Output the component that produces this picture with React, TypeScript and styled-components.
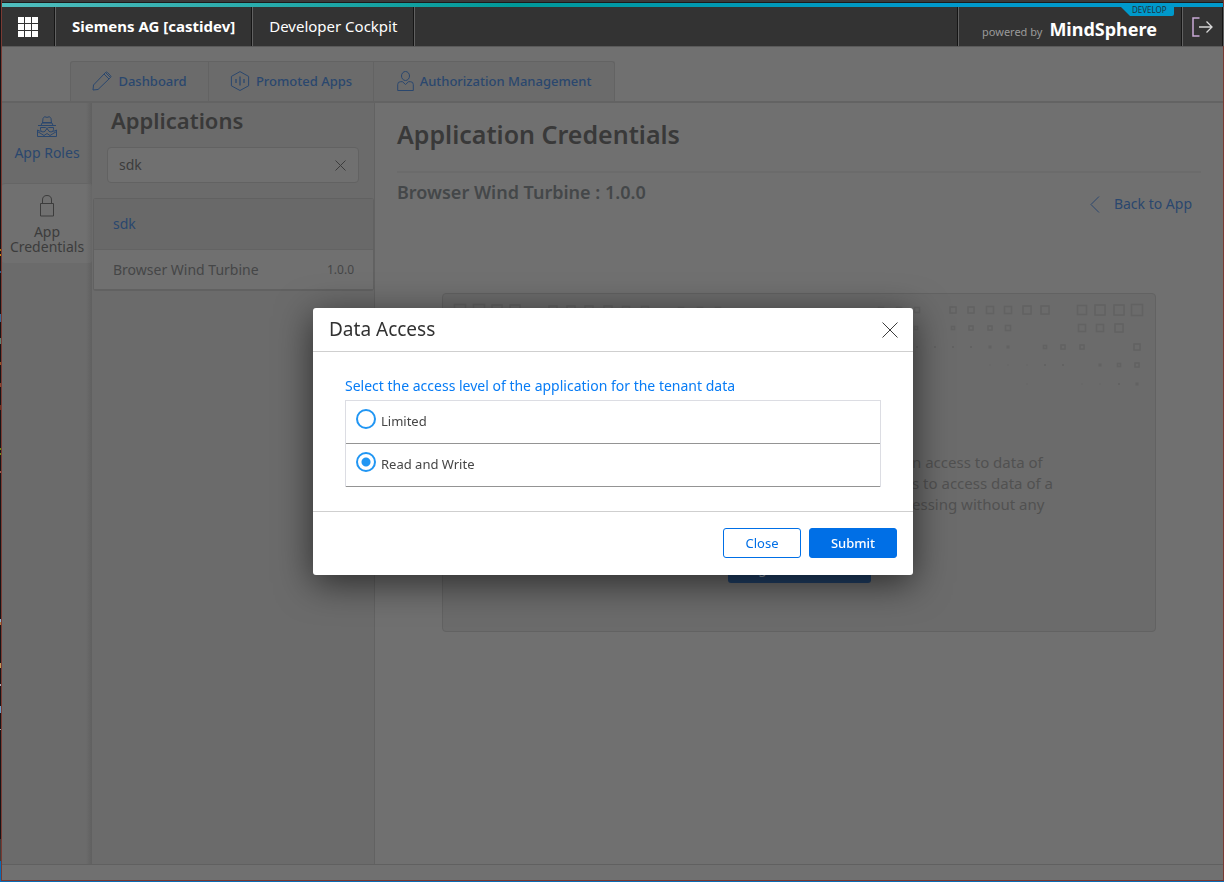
import React from "react";
import styled, { createGlobalStyle, css } from "styled-components";

const GlobalStyle = createGlobalStyle`
  * { box-sizing: border-box; }
  body {
    margin: 0;
    background: #707070;
    font-family: "Noto Sans", "Open Sans", sans-serif;
    font-size: 14px;
    color: #3c3c3c;
  }
  button, input { font: inherit; }
  a { text-decoration: none; }
  h1, h2, h3, p, ul { margin: 0; padding: 0; }
  ul { list-style: none; }
`;

const Desktop = styled.div`
  display: flex;
  min-height: 100vh;
  padding: 0 0 1px 1px;
  background: linear-gradient(
    #141417 249px, #b8740f 249px 251px, #141417 251px 254px, #c98212 254px 256px, #141417 256px 271px,
    #2c5f8f 271px 273px, #141417 273px 314px, #3a6a96 314px 322px, #141417 322px 338px,
    #5f8074 338px 344px, #141417 344px 362px, #95572a 362px 365px, #141417 365px 383px,
    #8a4630 383px 387px, #141417 387px 405px, #6e3222 405px 410px, #141417 410px 448px,
    #6c8f14 448px 450px, #141417 450px 453px, #6c8f14 453px 455px, #141417 455px 471px,
    #9a5e55 471px 473px, #141417 473px 619px, #8fb4d0 619px 622px, #b07840 622px 625px,
    #141417 625px 663px, #c29a58 663px 668px, #141417 668px 684px, #a8a8b4 684px 686px,
    #141417 686px 706px, #6a9cc4 706px 713px, #141417 713px 729px, #a8a8a8 729px 730px,
    #141417 730px 839px, #3c3c3c 839px 861px, #0a6cb4 861px
  );
`;

const Frame = styled.div`
  flex: 1;
  display: flex;
  flex-direction: column;
  min-width: 0;
  background: #707070;
  border: solid #793a32;
  border-width: 0 1px 1px 1px;
`;

const Header = styled.header`
  display: flex;
  flex-direction: column;
  background: #333333;
  border-bottom: 1px solid #5a5a5a;
`;

const TopEdge = styled.div`
  height: 3px;
  background: #3a3a3a;
  border-bottom: 1px solid #1c1c1c;
`;

const Accent = styled.div`
  height: 4px;
  background: linear-gradient(90deg, #50bebe 0%, #009999 42%, #0099cb 75%);
`;

const Bar = styled.div`
  display: flex;
  height: 39px;
  color: #ffffff;
  font-size: 15px;
`;

const divider = css`
  border-right: 1px solid #151515;
  box-shadow: 1px 0 0 #616161;
`;

const BarCell = styled.div<{ $strong?: boolean }>`
  display: flex;
  align-items: center;
  padding: 0 16px 2px 17px;
  font-weight: ${(p) => (p.$strong ? 700 : 400)};
  ${divider}
`;

const BarButton = styled.button<{ $width: number }>`
  display: flex;
  align-items: center;
  justify-content: center;
  width: ${(p) => p.$width}px;
  padding: 0;
  border: 0;
  background: none;
  color: inherit;
  ${divider}
`;

const BarSpacer = styled.div`
  flex: 1;
  ${divider}
`;

const Brand = styled.div`
  position: relative;
  display: flex;
  align-items: baseline;
  gap: 7px;
  padding: 9px 24px 0;
  line-height: 26px;
  ${divider}
`;

const PoweredBy = styled.span`
  font-size: 11px;
  color: #9a9a9a;
`;

const BrandName = styled.span`
  font-size: 18px;
  font-weight: 700;
`;

const StageBadge = styled.span`
  position: absolute;
  top: -1px;
  right: 7px;
  width: 54px;
  height: 10px;
  padding-left: 12px;
  background: #0099cb;
  border-radius: 0 0 2px 0;
  clip-path: polygon(0 0, 100% 0, 100% 100%, 10px 100%);
  color: #1f3340;
  font-size: 8px;
  line-height: 7px;
`;

const Tabs = styled.nav`
  display: flex;
  padding: 14px 0 0 68px;
  border-bottom: 2px solid #636363;
`;

const Tab = styled.a<{ $width: number }>`
  display: flex;
  align-items: center;
  justify-content: center;
  gap: 6px;
  width: ${(p) => p.$width}px;
  height: 40px;
  padding-bottom: 2px;
  background: #6b6b6b;
  border: solid #636363;
  border-width: 1px 1px 0 0;
  color: #2a476e;
  font-size: 13px;
  font-weight: 500;
  &:first-child { border-left-width: 1px; border-top-left-radius: 3px; }
  &:last-child { border-top-right-radius: 3px; }
`;

const Body = styled.div`
  flex: 1;
  display: flex;
`;

const Sidebar = styled.nav`
  width: 90px;
  background: linear-gradient(90deg, #6b6b6b 84px, #606060 90px);
`;

const SideItem = styled.a<{ $active?: boolean }>`
  display: flex;
  flex-direction: column;
  align-items: center;
  gap: 8px;
  height: 80px;
  padding-top: 13px;
  font-size: 14px;
  line-height: 15px;
  text-align: center;
  color: #2a476e;
  ${(p) =>
    p.$active &&
    css`
      gap: 7px;
      padding-top: 11px;
      background: linear-gradient(90deg, #707070 84px, #666666 90px);
      border-top: 1px solid #656565;
      border-radius: 3px;
      color: #3c3c3c;
    `}
`;

const AppPanel = styled.section`
  width: 283px;
  background: #6b6b6b;
  border-right: 1px solid #626262;
`;

const PanelTitle = styled.h2`
  padding: 2px 19px 0;
  font-size: 22px;
  line-height: 30px;
  font-weight: 600;
  color: #393939;
`;

const SearchBox = styled.label`
  display: flex;
  align-items: center;
  height: 36px;
  margin: 12px 15px 15px;
  padding: 0 12px 0 11px;
  background: #707070;
  border: 1px solid #626262;
  border-radius: 4px;
`;

const SearchInput = styled.input`
  flex: 1;
  min-width: 0;
  padding: 0 0 2px;
  border: 0;
  outline: 0;
  background: none;
  color: #3c3c3c;
`;

const IconButton = styled.button`
  display: flex;
  padding: 0;
  border: 0;
  background: none;
  color: inherit;
`;

const AppList = styled.ul`
  margin: 0 0 0 1px;
  border: 1px solid #616161;
  border-width: 1px 1px 2px;
  border-radius: 3px;
`;

const AppRow = styled.li<{ $heading?: boolean }>`
  display: flex;
  align-items: center;
  justify-content: space-between;
  height: ${(p) => (p.$heading ? 51 : 39)}px;
  padding: 0 19px 1px;
  border-bottom: ${(p) => (p.$heading ? "1px solid #636363" : "0")};
  background: ${(p) => (p.$heading ? "#696969" : "#707070")};
  color: ${(p) => (p.$heading ? "#2a476e" : "#454647")};
`;

const Version = styled.span`
  font-size: 12px;
`;

const Main = styled.main`
  flex: 1;
  min-width: 0;
  padding: 0 22px;
`;

const PageTitle = styled.h1`
  padding: 14px 0 20px;
  font-size: 25px;
  line-height: 34px;
  font-weight: 600;
  color: #393939;
  border-bottom: 2px solid #6b6b6b;
`;

const DetailBar = styled.div`
  display: flex;
  justify-content: space-between;
  align-items: flex-start;
  padding: 6px 9px 0 0;
  height: 120px;
`;

const DetailTitle = styled.h3`
  font-size: 18px;
  line-height: 26px;
  font-weight: 600;
  color: #444749;
`;

const BackLink = styled.a`
  display: flex;
  align-items: center;
  gap: 14px;
  padding-top: 14px;
  line-height: 22px;
  color: #2a476e;
`;

const EmptyCard = styled.section`
  display: flex;
  flex-direction: column;
  align-items: center;
  height: 339px;
  margin: 0 45px;
  background: #6b6b6b;
  border: 1px solid #626262;
  border-radius: 4px;
`;

const PatternSvg = styled.svg`
  display: block;
  width: 712px;
  height: 120px;
  color: #626262;
`;

const EmptyText = styled.p`
  align-self: flex-end;
  width: 243px;
  padding-top: 38px;
  font-size: 15px;
  line-height: 21px;
  color: #515151;
  white-space: nowrap;
`;

const RegisterButton = styled.button`
  width: 143px;
  height: 32px;
  margin-top: 36px;
  padding: 0 14px;
  border: 0;
  border-radius: 3px;
  background: #203f66;
  color: #8f9aa8;
  text-align: left;
`;

const Footer = styled.footer`
  height: 16px;
  border-top: 1px solid #606060;
`;

const Overlay = styled.div`
  position: fixed;
  inset: 0 0 0 2px;
  display: flex;
  align-items: center;
  justify-content: center;
`;

const Dialog = styled.form`
  width: 600px;
  background: #ffffff;
  border-radius: 3px;
  box-shadow: 0 8px 36px rgba(0, 0, 0, 0.6);
`;

const DialogHeader = styled.div`
  display: flex;
  align-items: center;
  justify-content: space-between;
  height: 44px;
  padding: 2px 15px 0 16px;
  border-bottom: 1px solid #cfcfcf;
`;

const DialogTitle = styled.h2`
  padding-bottom: 3px;
  font-size: 19px;
  line-height: 26px;
  font-weight: 400;
  color: #323232;
`;

const DialogBody = styled.fieldset`
  margin: 0;
  padding: 24px 32px;
  border: 0;
`;

const Legend = styled.legend`
  float: left;
  width: 100%;
  padding: 0;
  line-height: 20px;
  margin-bottom: 4px;
  color: #087cf5;
`;

const Choices = styled.div`
  clear: both;
  border: solid #dcdde3;
  border-width: 1px 1px 0;
`;

const Choice = styled.label`
  display: flex;
  align-items: center;
  gap: 5px;
  height: 43px;
  padding: 0 10px 6px;
  border-bottom: 1px solid #949494;
  color: #464646;
  font-size: 13px;
`;

const Radio = styled.input`
  appearance: none;
  width: 20px;
  height: 20px;
  margin: 0;
  border: 2px solid #2196f3;
  border-radius: 50%;
  &:checked {
    background: radial-gradient(circle, #2196f3 4px, transparent 5px);
  }
`;

const ChoiceText = styled.span`
  padding-top: 5px;
`;

const DialogFooter = styled.div`
  display: flex;
  justify-content: flex-end;
  gap: 8px;
  padding: 16px 16px 17px;
  border-top: 1px solid #cfcfcf;
`;

const DialogButton = styled.button<{ $primary?: boolean }>`
  width: ${(p) => (p.$primary ? 88 : 78)}px;
  height: 30px;
  padding: 0;
  border: 1px solid #006fe6;
  border-radius: 3px;
  background: ${(p) => (p.$primary ? "#006fe6" : "#ffffff")};
  color: ${(p) => (p.$primary ? "#ffffff" : "#006fe6")};
  font-size: 13px;
  font-weight: ${(p) => (p.$primary ? 500 : 400)};
`;

const Icon = ({ w, h = w, children }: { w: number; h?: number; children: React.ReactNode }) => (
  <svg width={w} height={h} viewBox={`0 0 ${w} ${h}`} fill="none" stroke="currentColor" strokeWidth="1" aria-hidden="true">
    {children}
  </svg>
);

const LauncherIcon = () => (
  <svg width="20" height="20" viewBox="0 0 20 20" fill="currentColor" aria-hidden="true">
    {[0, 7, 14].map((y) => [0, 7, 14].map((x) => <rect key={`${x}-${y}`} x={x} y={y} width="6" height="6" />))}
  </svg>
);

const PencilIcon = () => (
  <Icon w={20}>
    <path d="M1 19l.500-5L13.500 1.500q1-1 2 0l3 3q1 1 0 2L6 18.500zM12 3l5 5M13.500 1.500l5 5" />
  </Icon>
);

const AppHexIcon = () => (
  <Icon w={20}>
    <path d="M10 .6l8.600 4.800v9.400L10 19.500l-8.600-4.700V5.400z" />
    <path d="M6 8v4M10 5.500v9M14 8v4" strokeWidth="1.300" />
  </Icon>
);

const UserIcon = () => (
  <Icon w={17} h={20}>
    <ellipse cx="8.500" cy="5" rx="4" ry="4.500" />
    <path d="M5.500 10.700H3.500Q.7 10.700.7 13.500v6h15.600v-6q0-2.800-2.800-2.800h-2l-3 2.800z" />
  </Icon>
);

const SpyIcon = () => (
  <Icon w={20} h={21}>
    <path d="M5.500 7L6 2.500 7.500.7 10 1.400 12.500.7 14 2.500l.5 4.500M5.500 6.500h9M1 9.500h18M4 9.500l1-2.500h10l1 2.500" />
    <path d="M3.500 11.500h5l1.500 1 1.500-1h5v2q0 2.500-2.500 2.500T11 13.500L10 13l-1 .5Q8.500 16 6 16t-2.500-2.500z" />
    <path d="M3.500 15.500l-3-1.500v6.500h19V14l-3 1.500M.5 15.500l6.500 4 3-2 3 2 6.500-4" />
  </Icon>
);

const LockIcon = () => (
  <Icon w={16} h={22}>
    <path d="M1.500 8.500h13v12.500h-13zM3.500 8.500V5q0-4.500 4.500-4.500T12.500 5v3.500" />
  </Icon>
);

const CrossIcon = ({ size }: { size: number }) => (
  <Icon w={size}>
    <path d={`M.5.5L${size - 0.5} ${size - 0.5}M${size - 0.5}.5L.5 ${size - 0.5}`} />
  </Icon>
);

const ChevronIcon = () => (
  <Icon w={10} h={17}>
    <path d="M9 .5l-8 8 8 8" />
  </Icon>
);

const LogoutIcon = () => (
  <Icon w={21} h={20}>
    <path d="M7.500 1H1v18h6.500" stroke="#c9a9d6" strokeWidth="1.500" />
    <path d="M7 10h13M14.500 4.500L20 10l-5.500 5.500" stroke="#d8d8d8" strokeWidth="1.300" />
  </Icon>
);

type PatternRow = { y: number; marks: [number, number][] };

const patternRows: PatternRow[] = [
  {
    y: 16,
    marks: [
      [17, 11], [36, 11], [54, 10], [72, 10], [110, 8], [128, 8], [146, 8], [165, 8], [183, 7], [202, 7],
      [238, 5], [257, 5], [275, 5], [438, 5], [456, 5], [474, 5], [510, 6], [528, 6], [547, 7], [565, 7],
      [584, 8], [602, 8], [639, 9], [657, 10], [676, 10], [694, 11],
    ],
  },
  { y: 34, marks: [[473, 3], [510, 3], [528, 4], [547, 4], [565, 5], [639, 7], [657, 7], [676, 8]] },
  {
    y: 53,
    marks: [[474, 1], [492, 1], [510, 1], [528, 1], [547, 2], [565, 2], [602, 3], [620, 4], [639, 4], [694, 6]],
  },
  { y: 71, marks: [[547, 0], [565, 0], [584, 0], [602, 1], [620, 1], [657, 2], [676, 3], [694, 4]] },
  { y: 90, marks: [[584, 0], [639, 0], [657, 0], [676, 1], [694, 2]] },
];

const Pattern = () => (
  <PatternSvg viewBox="0 0 712 120" aria-hidden="true">
    {patternRows.map((row) =>
      row.marks.map(([x, size]) =>
        size < 3 ? (
          <rect
            key={`${row.y}-${x}`}
            x={x - (size + 1) / 2}
            y={row.y - (size + 1) / 2}
            width={size + 1}
            height={size + 1}
            fill="currentColor"
          />
        ) : (
          <rect
            key={`${row.y}-${x}`}
            x={x - size / 2}
            y={row.y - size / 2}
            width={size}
            height={size}
            fill="none"
            stroke="currentColor"
            strokeWidth="1.500"
          />
        )
      )
    )}
  </PatternSvg>
);

export default function App() {
  return (
    <>
      <GlobalStyle />
      <Desktop>
        <Frame>
          <Header>
            <TopEdge />
            <Accent />
            <Bar>
              <BarButton $width={53} aria-label="Launchpad">
                <LauncherIcon />
              </BarButton>
              <BarCell $strong>Siemens AG [castidev]</BarCell>
              <BarCell>Developer Cockpit</BarCell>
              <BarSpacer />
              <Brand>
                <StageBadge>DEVELOP</StageBadge>
                <PoweredBy>powered by</PoweredBy>
                <BrandName>MindSphere</BrandName>
              </Brand>
              <BarButton $width={41} aria-label="Log out">
                <LogoutIcon />
              </BarButton>
            </Bar>
          </Header>

          <Tabs>
            <Tab href="#dashboard" $width={139}>
              <PencilIcon />
              Dashboard
            </Tab>
            <Tab href="#promoted" $width={165}>
              <AppHexIcon />
              Promoted Apps
            </Tab>
            <Tab href="#authorization" $width={241}>
              <UserIcon />
              Authorization Management
            </Tab>
          </Tabs>

          <Body>
            <Sidebar>
              <SideItem href="#roles">
                <SpyIcon />
                App Roles
              </SideItem>
              <SideItem href="#credentials" $active>
                <LockIcon />
                App Credentials
              </SideItem>
            </Sidebar>

            <AppPanel>
              <PanelTitle>Applications</PanelTitle>
              <SearchBox>
                <SearchInput type="text" defaultValue="sdk" aria-label="Search applications" />
                <IconButton type="button" aria-label="Clear search">
                  <CrossIcon size={11} />
                </IconButton>
              </SearchBox>
              <AppList>
                <AppRow $heading>sdk</AppRow>
                <AppRow>
                  Browser Wind Turbine
                  <Version>1.0.0</Version>
                </AppRow>
              </AppList>
            </AppPanel>

            <Main>
              <PageTitle>Application Credentials</PageTitle>
              <DetailBar>
                <DetailTitle>Browser Wind Turbine : 1.0.0</DetailTitle>
                <BackLink href="#app">
                  <ChevronIcon />
                  Back to App
                </BackLink>
              </DetailBar>
              <EmptyCard>
                <Pattern />
                <EmptyText>
                  n access to data of
                  <br />s to access data of a
                  <br />
                  essing without any
                </EmptyText>
                <RegisterButton type="button">Register</RegisterButton>
              </EmptyCard>
            </Main>
          </Body>
          <Footer />
        </Frame>
      </Desktop>

      <Overlay>
        <Dialog role="dialog" aria-labelledby="dialog-title" onSubmit={(e) => e.preventDefault()}>
          <DialogHeader>
            <DialogTitle id="dialog-title">Data Access</DialogTitle>
            <IconButton type="button" aria-label="Dismiss">
              <CrossIcon size={16} />
            </IconButton>
          </DialogHeader>
          <DialogBody>
            <Legend>Select the access level of the application for the tenant data</Legend>
            <Choices>
              <Choice>
                <Radio type="radio" name="access" />
                <ChoiceText>Limited</ChoiceText>
              </Choice>
              <Choice>
                <Radio type="radio" name="access" defaultChecked />
                <ChoiceText>Read and Write</ChoiceText>
              </Choice>
            </Choices>
          </DialogBody>
          <DialogFooter>
            <DialogButton type="button">Close</DialogButton>
            <DialogButton type="submit" $primary>
              Submit
            </DialogButton>
          </DialogFooter>
        </Dialog>
      </Overlay>
    </>
  );
}
